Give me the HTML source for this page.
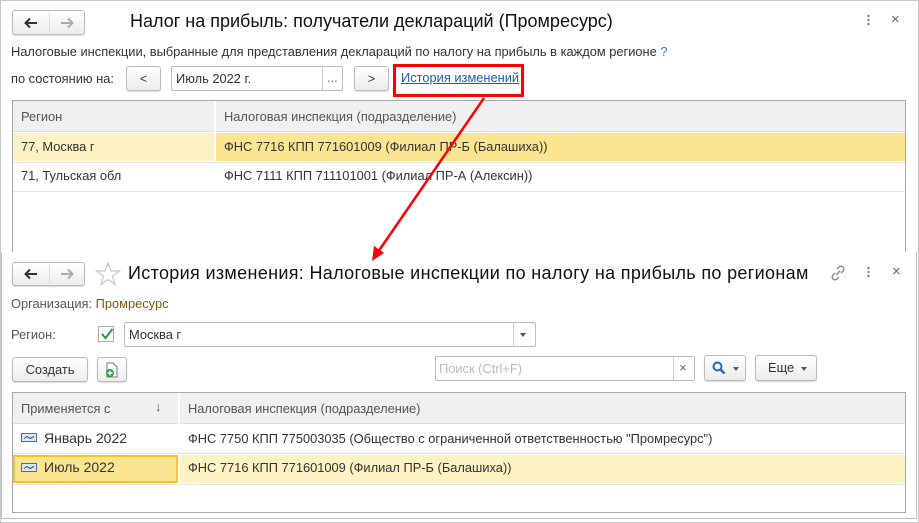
<!DOCTYPE html>
<html><head><meta charset="utf-8"><style>
*{box-sizing:border-box;margin:0;padding:0}
body{width:919px;height:523px;background:#fff;position:relative;overflow:hidden;font-family:"Liberation Sans",Arial,sans-serif;font-size:12.85px;color:#333}
.a{position:absolute;white-space:nowrap}
.btn{position:absolute;border:1px solid #bbb;border-radius:3px;background:linear-gradient(#fff,#ececec);box-shadow:0 1px 1px rgba(0,0,0,.15);text-align:center;color:#444}
.inp{position:absolute;border:1px solid #bbb;border-radius:2px;background:#fff}
.t{font-size:18px;color:#111}
</style></head><body>
<!-- top window -->
<div class="a" style="left:0;top:0;width:919px;height:523px;border:1px solid #c8c8c8"></div>
<div class="btn" style="left:12px;top:10px;width:73px;height:25px"><div class="a" style="left:36px;top:2px;width:1px;height:19px;background:#ddd"></div>
<svg class="a" style="left:11px;top:6px" width="14" height="12" viewBox="0 0 14 12"><path d="M13 6H2M6 1.5L1.5 6 6 10.5" fill="none" stroke="#333" stroke-width="2"/></svg>
<svg class="a" style="left:47px;top:6px" width="14" height="12" viewBox="0 0 14 12"><path d="M1 6h11M8 1.5L12.5 6 8 10.5" fill="none" stroke="#aaa" stroke-width="2"/></svg></div>
<div class="a t" style="left:130px;top:11px">Налог на прибыль: получатели деклараций (Промресурс)</div>
<div class="a" style="left:867px;top:14px;width:3px;height:12px;background:radial-gradient(circle,#888 1px,transparent 1.5px) 0 0/3px 4px"></div>
<div class="a" style="left:891px;top:11px;font-size:15px;color:#666">×</div>
<div class="a" style="left:11px;top:44px">Налоговые инспекции, выбранные для представления деклараций по налогу на прибыль в каждом регионе <span style="color:#3b7cc8">?</span></div>
<div class="a" style="left:11px;top:71px">по состоянию на:</div>
<div class="btn" style="left:126px;top:66px;width:35px;height:25px;line-height:23px">&lt;</div>
<div class="inp" style="left:171px;top:66px;width:172px;height:25px"><span class="a" style="left:4px;top:4px">Июль 2022 г.</span><div class="a" style="left:150px;top:0;width:1px;height:23px;background:#ccc"></div><span class="a" style="left:155px;top:3px;color:#666">...</span></div>
<div class="btn" style="left:354px;top:66px;width:35px;height:25px;line-height:23px">&gt;</div>
<div class="a" style="left:401px;top:70px;color:#1a5fb4;text-decoration:underline">История изменений</div>
<div class="a" style="left:393px;top:64px;width:131px;height:33px;border:3px solid #f00"></div>
<div class="a" style="left:12px;top:100px;width:894px;height:160px;border:1px solid #a8a8a8;border-bottom:none">
 <div class="a" style="left:0;top:0;width:892px;height:31px;background:#f0f0f0;border-bottom:1px solid #ddd"></div>
 <div class="a" style="left:201px;top:0;width:2px;height:31px;background:#fff"></div>
 <span class="a" style="left:8px;top:8px;color:#555">Регион</span>
 <span class="a" style="left:211px;top:8px;color:#555">Налоговая инспекция (подразделение)</span>
 <div class="a" style="left:0;top:32px;width:201px;height:28px;background:#fdf2c4"></div>
 <div class="a" style="left:203px;top:32px;width:689px;height:28px;background:#fce590"></div>
 <span class="a" style="left:8px;top:38px">77, Москва г</span>
 <span class="a" style="left:211px;top:38px">ФНС 7716 КПП 771601009 (Филиал ПР-Б (Балашиха))</span>
 <div class="a" style="left:0;top:61px;width:892px;height:1px;background:#e4e4e4"></div>
 <span class="a" style="left:8px;top:67px">71, Тульская обл</span>
 <span class="a" style="left:211px;top:67px">ФНС 7111 КПП 711101001 (Филиал ПР-А (Алексин))</span>
 <div class="a" style="left:0;top:90px;width:892px;height:1px;background:#e4e4e4"></div>
</div>
<!-- bottom window -->
<div class="a" style="left:1px;top:252px;width:916px;height:267px;background:#fff;border:1px solid #c0c0c0;border-top:none"></div>
<div class="btn" style="left:12px;top:262px;width:73px;height:24px"><div class="a" style="left:36px;top:2px;width:1px;height:18px;background:#ddd"></div>
<svg class="a" style="left:11px;top:5px" width="14" height="12" viewBox="0 0 14 12"><path d="M13 6H2M6 1.5L1.5 6 6 10.5" fill="none" stroke="#333" stroke-width="2"/></svg>
<svg class="a" style="left:47px;top:5px" width="14" height="12" viewBox="0 0 14 12"><path d="M1 6h11M8 1.5L12.5 6 8 10.5" fill="none" stroke="#aaa" stroke-width="2"/></svg></div>
<svg class="a" style="left:95px;top:261px" width="26" height="26" viewBox="0 0 26 26"><polygon points="13,2 16,10 24.5,10 17.5,15 20,23.5 13,18.5 6,23.5 8.5,15 1.5,10 10,10" fill="none" stroke="#c8c8c8" stroke-width="1.2"/></svg>
<div class="a t" style="left:128px;top:263px;letter-spacing:0.33px">История изменения: Налоговые инспекции по налогу на прибыль по регионам</div>
<svg class="a" style="left:830px;top:265px" width="16" height="16" viewBox="0 0 16 16"><g fill="none" stroke="#888" stroke-width="1.3"><path d="M7 4l2-2a2.5 2.5 0 0 1 4 4l-2 2"/><path d="M9 12l-2 2a2.5 2.5 0 0 1-4-4l2-2"/><path d="M6 10l4-4"/></g></svg>
<div class="a" style="left:867px;top:266px;width:3px;height:12px;background:radial-gradient(circle,#888 1px,transparent 1.5px) 0 0/3px 4px"></div>
<div class="a" style="left:892px;top:263px;font-size:15px;color:#666">×</div>
<div class="a" style="left:11px;top:296px;color:#555">Организация: <span style="color:#7a5a10">Промресурс</span></div>
<div class="a" style="left:11px;top:327px;color:#555">Регион:</div>
<div class="a" style="left:98px;top:326px;width:16px;height:16px;border:1px solid #aaa;background:#fff"><svg class="a" style="left:1px;top:0" width="14" height="14" viewBox="0 0 14 14"><path d="M2 7l3.5 4L12.5 2" fill="none" stroke="#2a9a3a" stroke-width="2"/></svg></div>
<div class="inp" style="left:124px;top:322px;width:412px;height:25px"><span class="a" style="left:4px;top:4px">Москва г</span><div class="a" style="left:388px;top:0;width:1px;height:23px;background:#ccc"></div><div class="a" style="left:395px;top:10px;border:3px solid transparent;border-top:4px solid #555"></div></div>
<div class="btn" style="left:12px;top:357px;width:76px;height:25px;line-height:23px;color:#333">Создать</div>
<div class="btn" style="left:97px;top:357px;width:30px;height:25px"><svg class="a" style="left:6px;top:4px" width="16" height="16" viewBox="0 0 16 16"><path d="M3 1h6l4 4v10H3z" fill="#fff" stroke="#777"/><circle cx="6" cy="11" r="4" fill="#2aa040"/><path d="M6 8.5v5M3.5 11h5" stroke="#fff" stroke-width="1.4"/></svg></div>
<div class="inp" style="left:435px;top:356px;width:260px;height:25px"><span class="a" style="left:3px;top:4px;color:#bbb">Поиск (Ctrl+F)</span><div class="a" style="left:237px;top:0;width:1px;height:23px;background:#ccc"></div><span class="a" style="left:243px;top:3px;color:#666;font-size:13px">×</span></div>
<div class="btn" style="left:704px;top:355px;width:42px;height:26px"><svg class="a" style="left:7px;top:5px" width="14" height="14" viewBox="0 0 14 14"><circle cx="5.5" cy="5.5" r="4" fill="none" stroke="#2a6ab0" stroke-width="2"/><path d="M8.5 8.5l4 4" stroke="#2a6ab0" stroke-width="2.4"/></svg><div class="a" style="left:28px;top:11px;border:3px solid transparent;border-top:4px solid #555"></div></div>
<div class="btn" style="left:755px;top:355px;width:62px;height:26px;color:#333"><span class="a" style="left:12px;top:4px">Еще</span><div class="a" style="left:45px;top:11px;border:3px solid transparent;border-top:4px solid #555"></div></div>
<div class="a" style="left:12px;top:392px;width:894px;height:121px;border:1px solid #a8a8a8">
 <div class="a" style="left:0;top:0;width:892px;height:31px;background:#f0f0f0;border-bottom:1px solid #ddd"></div>
 <div class="a" style="left:165px;top:0;width:2px;height:31px;background:#fff"></div>
 <span class="a" style="left:8px;top:8px;color:#555">Применяется с</span>
 <span class="a" style="left:142px;top:6px;color:#555">↓</span>
 <span class="a" style="left:175px;top:8px;color:#555">Налоговая инспекция (подразделение)</span>
 <svg class="a" style="left:8px;top:40px" width="16" height="9" viewBox="0 0 16 9"><rect x=".5" y=".5" width="15" height="8" fill="#dce8f5" stroke="#4a6d9a"/><path d="M3 5.5l3-2 3 2 4-2" fill="none" stroke="#2a4d7a"/></svg>
 <span class="a" style="left:31px;top:37px;font-size:14px">Январь 2022</span>
 <span class="a" style="left:175px;top:38px">ФНС 7750 КПП 775003035 (Общество с ограниченной ответственностью "Промресурс")</span>
 <div class="a" style="left:0;top:60px;width:892px;height:1px;background:#e4e4e4"></div>
 <div class="a" style="left:0;top:62px;width:165px;height:28px;background:#fce590;border:2px solid #f4c430"></div>
 <div class="a" style="left:167px;top:62px;width:725px;height:28px;background:#fdf2c4"></div>
 <svg class="a" style="left:8px;top:70px" width="16" height="9" viewBox="0 0 16 9"><rect x=".5" y=".5" width="15" height="8" fill="#dce8f5" stroke="#4a6d9a"/><path d="M3 5.5l3-2 3 2 4-2" fill="none" stroke="#2a4d7a"/></svg>
 <span class="a" style="left:31px;top:66px;font-size:14px">Июль 2022</span>
 <span class="a" style="left:175px;top:67px">ФНС 7716 КПП 771601009 (Филиал ПР-Б (Балашиха))</span>
 <div class="a" style="left:0;top:91px;width:892px;height:1px;background:#e4e4e4"></div>
</div>
<!-- arrow -->
<svg class="a" style="left:0;top:0" width="919" height="523"><line x1="484" y1="98" x2="378" y2="252" stroke="#f00" stroke-width="2.5"/><polygon points="372,261 374,246 384,253" fill="#f00"/></svg>
</body></html>
